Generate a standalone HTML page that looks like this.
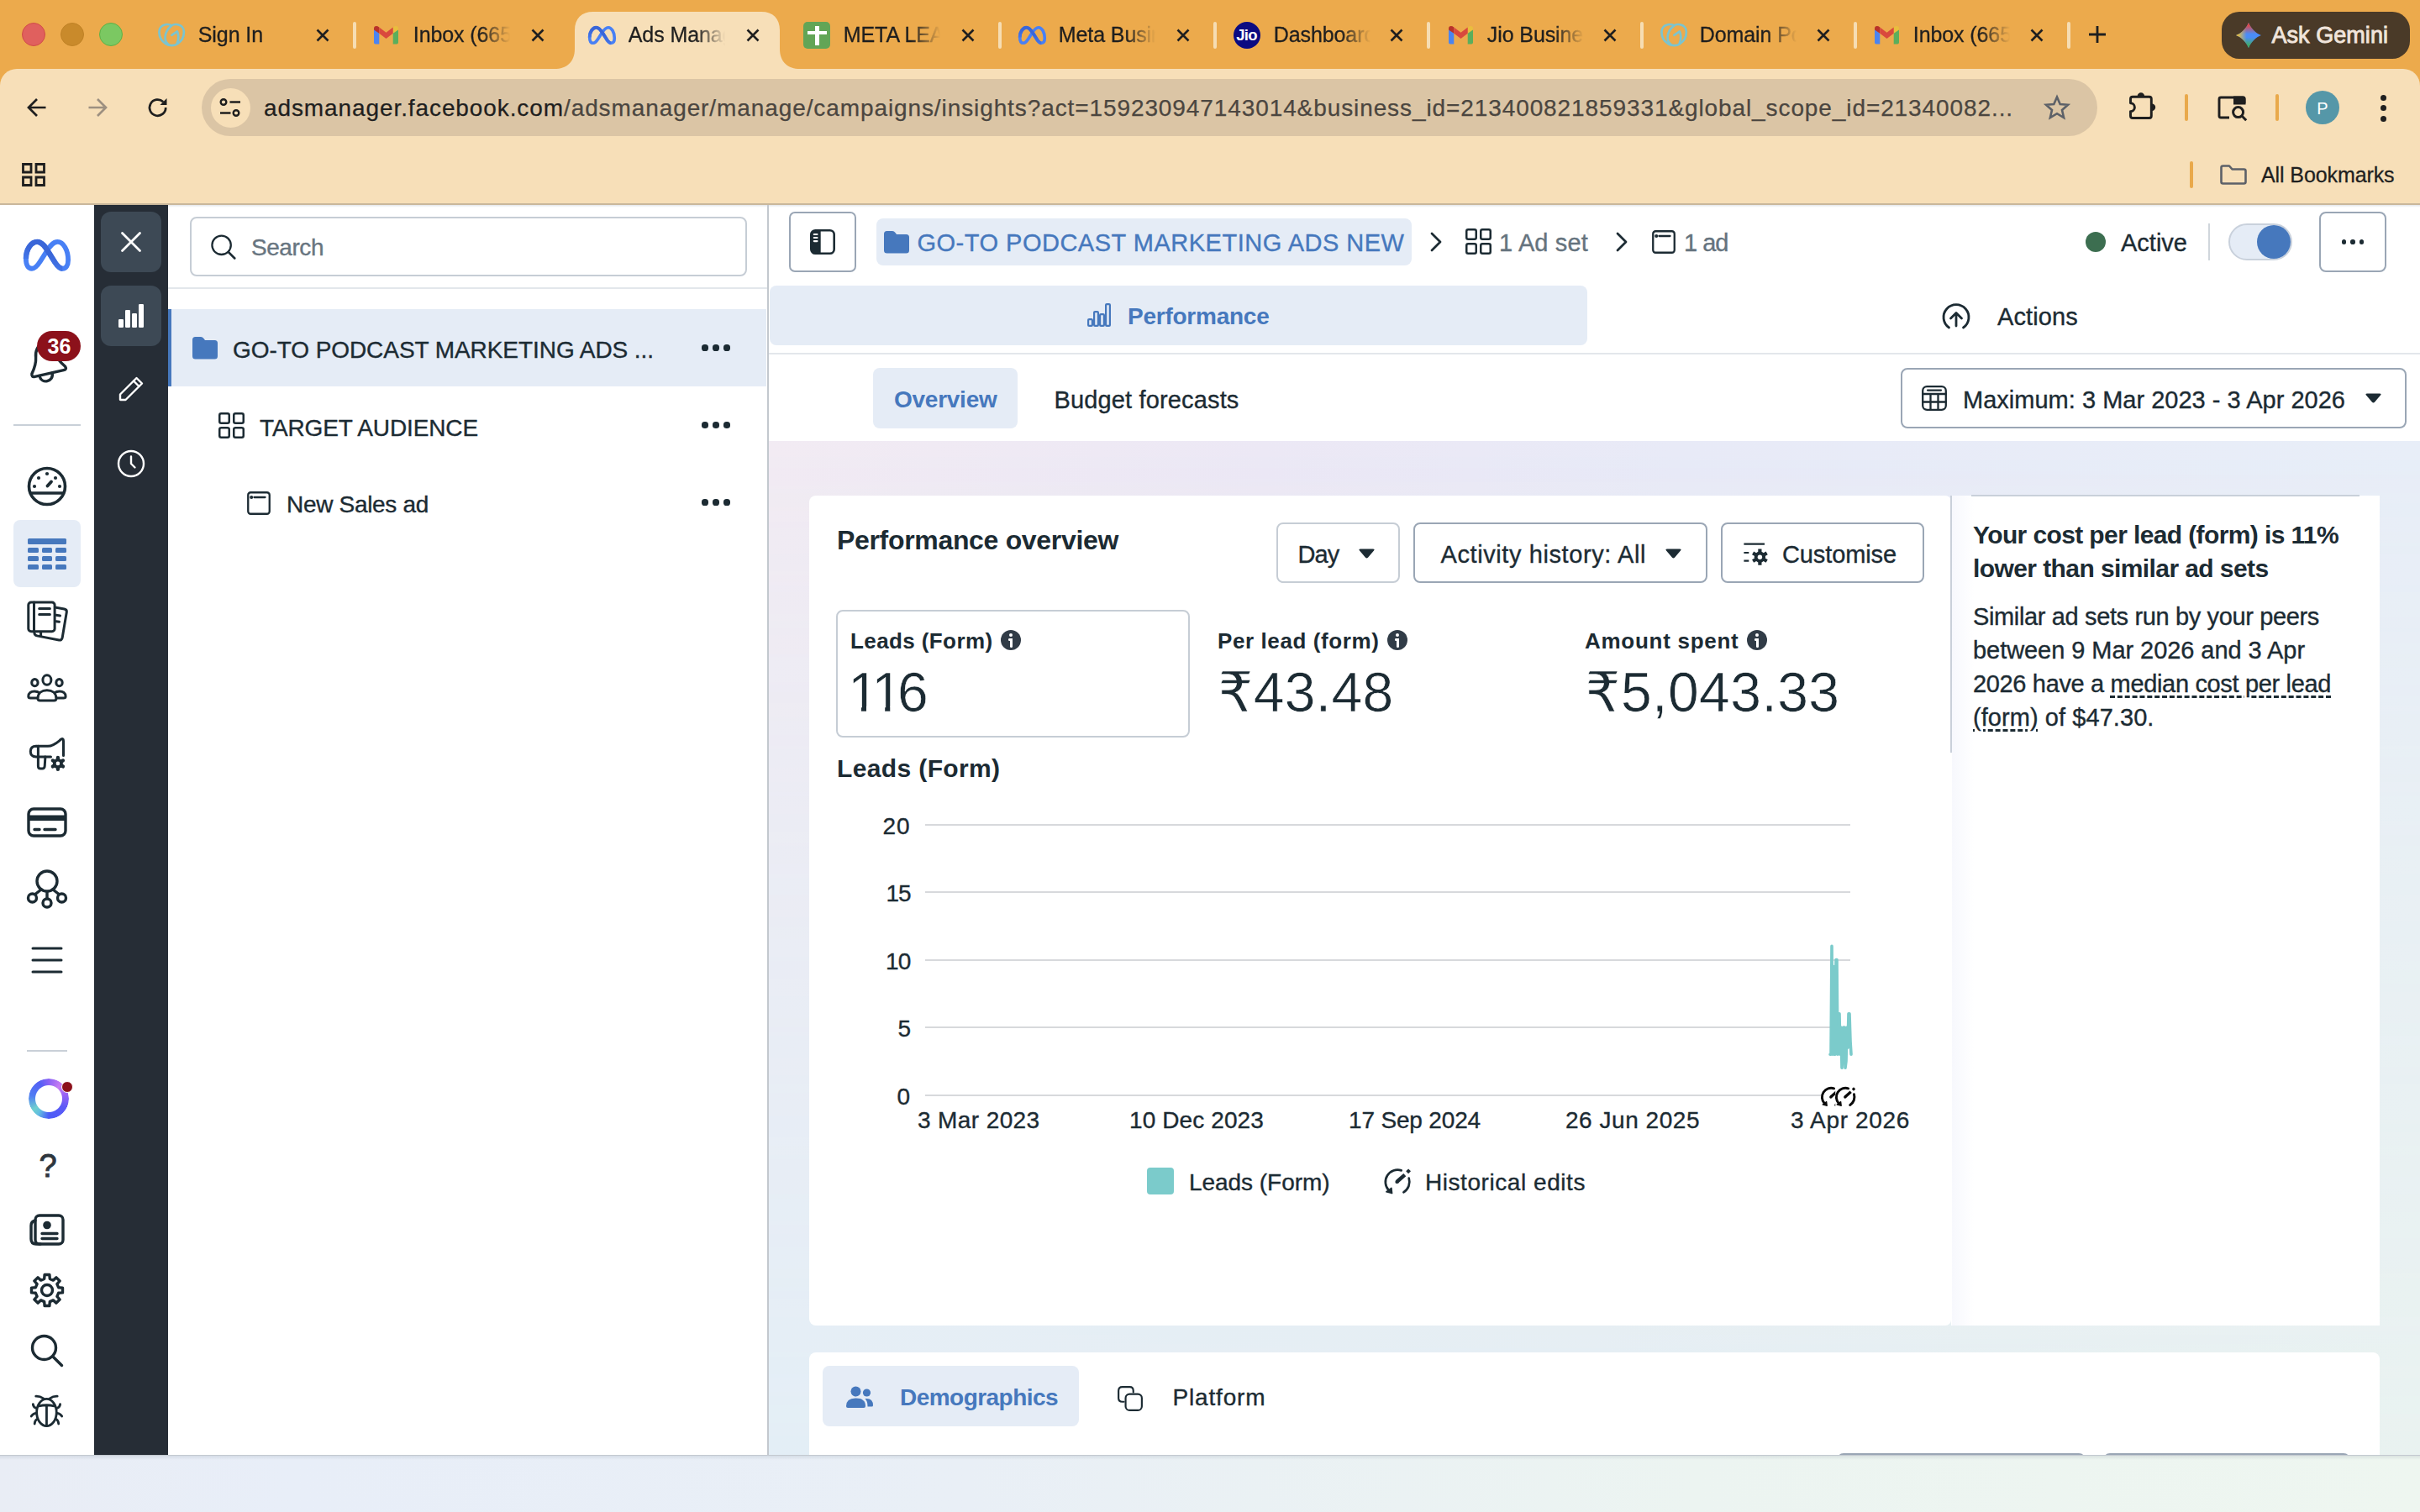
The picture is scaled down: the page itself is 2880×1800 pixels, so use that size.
<!DOCTYPE html>
<html lang="en"><head><meta charset="utf-8"><title>Ads Manager - Manage ads - Insights</title>
<style>
html,body{margin:0;padding:0;}
body{width:2880px;height:1800px;overflow:hidden;position:relative;background:#fff;font-family:"Liberation Sans","DejaVu Sans",sans-serif;color:#1C2B33;}
.a{position:absolute;}
.t{position:absolute;white-space:nowrap;}
svg{position:absolute;overflow:visible;}
.box{position:absolute;box-sizing:border-box;}
</style></head><body>
<div class="box" style="left:0px;top:0px;width:2880px;height:120px;background:#ECAA4C;"></div>
<div class="box" style="left:0px;top:82px;width:2880px;height:161px;background:#F7DFB8;border-radius:20px 20px 0 0;"></div>
<div class="box" style="left:0px;top:242px;width:2880px;height:2px;background:#C9B79B;"></div>
<div class="box" style="left:26px;top:27px;width:28px;height:28px;background:#E0605E;border-radius:14px;border:1px solid #D14B47;"></div>
<div class="box" style="left:72px;top:27px;width:28px;height:28px;background:#C98A2B;border-radius:14px;border:1px solid #C08226;"></div>
<div class="box" style="left:118px;top:27px;width:28px;height:28px;background:#7BC862;border-radius:14px;border:1px solid #5FB046;"></div>
<svg style="left:660px;top:14px" width="292" height="68" viewBox="0 0 292 68"><path fill="#F7DFB8" d="M0 68 C14 68 24 60 24 44 L24 22 C24 8 32 0 46 0 L246 0 C260 0 268 8 268 22 L268 44 C268 60 278 68 292 68 Z"/></svg>
<svg style="left:187.8px;top:27.4px;" width="33" height="30" viewBox="0 0 33 30" fill="none"><g stroke="#7BC4CF" stroke-width="2.700" fill="none" stroke-linecap="round" stroke-linejoin="round"><path d="M16.200 3.400 C14.500 2.300 12 1.600 9 2.300 C4 3.400 1.400 7 1.400 11 C1.400 17 5 22.500 9.500 25.300 C13 27.600 19.500 27.600 23 25.300 C27.500 22.500 30.900 17 30.900 11 C30.900 7 28.300 3.400 23.400 2.300 C20.400 1.600 17.900 2.300 16.200 3.400 Z"/><path d="M16.200 3.400 C12.500 6.500 8.500 12 8.500 17.500 C8.500 22 10.500 25 13.500 26.700"/><path d="M16.400 14.800 L22.900 10.400 C24.500 14 24.800 19.500 22.800 24.500"/></g></svg>
<div class="a" style="left:235.8px;top:25.300px;width:118px;height:32px;overflow:hidden;white-space:nowrap;font-size:25px;line-height:32px;color:#1F1F1F;letter-spacing:-0.1px;-webkit-text-stroke:0.3px;-webkit-mask-image:linear-gradient(90deg,#000 80px,transparent 115px);mask-image:linear-gradient(90deg,#000 80px,transparent 115px)">Sign In</div>
<svg style="left:376px;top:34px;" width="16" height="16" viewBox="0 0 16 16" fill="none"><path d="M1.5 1.5 L14.5 14.5 M14.5 1.5 L1.5 14.5" stroke="#1F1F1F" stroke-width="2.6" stroke-linecap="butt"/></svg>
<div class="box" style="left:419.5px;top:26px;width:4px;height:32px;background:#F6DDB3;border-radius:2px;"></div>
<svg style="left:444.7px;top:31px;" width="29" height="21.5" viewBox="0 0 30 22" fill="none"><path d="M0 3 L0 20 Q0 22 2 22 L6.5 22 L6.5 9 Z" fill="#4B84F0"/><path d="M30 3 L30 20 Q30 22 28 22 L23.5 22 L23.5 9 Z" fill="#5BAE5C"/><path d="M0 3 Q0 0 3 0 Q4.5 0 6.5 1.5 L6.5 9 L0 4.5 Z" fill="#B8322A"/><path d="M30 3 Q30 0 27 0 Q25.500 0 23.5 1.5 L23.5 9 L30 4.5 Z" fill="#E9BE3E"/><path d="M6.5 1.5 L15 8 L23.5 1.5 L23.5 9 L15 15.5 L6.5 9 Z" fill="#D9493D"/></svg>
<div class="a" style="left:491.8px;top:25.300px;width:118px;height:32px;overflow:hidden;white-space:nowrap;font-size:25px;line-height:32px;color:#1F1F1F;letter-spacing:-0.1px;-webkit-text-stroke:0.3px;-webkit-mask-image:linear-gradient(90deg,#000 80px,transparent 115px);mask-image:linear-gradient(90deg,#000 80px,transparent 115px)">Inbox (665) - pgrowth</div>
<svg style="left:632px;top:34px;" width="16" height="16" viewBox="0 0 16 16" fill="none"><path d="M1.5 1.5 L14.5 14.5 M14.5 1.5 L1.5 14.5" stroke="#1F1F1F" stroke-width="2.6" stroke-linecap="butt"/></svg>
<svg style="left:700px;top:31px" width="33" height="22" viewBox="0 0 56 37.700" preserveAspectRatio="none"><defs><linearGradient id="mg1" gradientUnits="userSpaceOnUse" x1="1" y1="32" x2="9" y2="10"><stop offset="0" stop-color="#4880F5"/><stop offset="1" stop-color="#3A66D8"/></linearGradient></defs><path d="M2.900 23 C2.900 12 9 2.900 16.300 2.900 C22 2.900 26 9 30 15.500 L37.500 27.500 C40.500 32 43 34.750 46.300 34.750 C50.500 34.750 53.100 31 53.100 24.500 C53.100 13 47.500 2.900 40.500 2.900 C35 2.900 31 8.500 27 15 L20 26 C16.500 31.500 13.500 34.750 10 34.750 C5.500 34.750 2.900 30.500 2.900 23 Z" stroke="#4880F5" stroke-width="6.2" stroke-linejoin="round" fill="none"/><path d="M2.900 23 C2.900 12 9 2.900 16.300 2.900 C22 2.900 26 9 30 15.500 L37.500 27.500 C40.500 32 43 34.750 46.300 34.750" stroke="url(#mg1)" stroke-width="6.8" fill="none"/></svg>
<div class="a" style="left:747.8px;top:25.300px;width:118px;height:32px;overflow:hidden;white-space:nowrap;font-size:25px;line-height:32px;color:#1F1F1F;letter-spacing:-0.1px;-webkit-text-stroke:0.3px;-webkit-mask-image:linear-gradient(90deg,#000 80px,transparent 115px);mask-image:linear-gradient(90deg,#000 80px,transparent 115px)">Ads Manager - Manage ads</div>
<svg style="left:888px;top:34px;" width="16" height="16" viewBox="0 0 16 16" fill="none"><path d="M1.5 1.5 L14.5 14.5 M14.5 1.5 L1.5 14.5" stroke="#1F1F1F" stroke-width="2.6" stroke-linecap="butt"/></svg>
<div class="box" style="left:956px;top:26px;width:32px;height:32px;background:#62A556;border-radius:5px;"></div>
<div class="box" style="left:969.5px;top:30.5px;width:5px;height:23px;background:#fff;"></div>
<div class="box" style="left:960.5px;top:36.7px;width:23px;height:4.6px;background:#fff;"></div>
<div class="a" style="left:1003.8px;top:25.300px;width:118px;height:32px;overflow:hidden;white-space:nowrap;font-size:25px;line-height:32px;color:#1F1F1F;letter-spacing:-0.1px;-webkit-text-stroke:0.3px;-webkit-mask-image:linear-gradient(90deg,#000 80px,transparent 115px);mask-image:linear-gradient(90deg,#000 80px,transparent 115px)">META LEADS - Google Sheets</div>
<svg style="left:1144px;top:34px;" width="16" height="16" viewBox="0 0 16 16" fill="none"><path d="M1.5 1.5 L14.5 14.5 M14.5 1.5 L1.5 14.5" stroke="#1F1F1F" stroke-width="2.6" stroke-linecap="butt"/></svg>
<div class="box" style="left:1187.5px;top:26px;width:4px;height:32px;background:#F6DDB3;border-radius:2px;"></div>
<svg style="left:1212px;top:31px" width="33" height="22" viewBox="0 0 56 37.700" preserveAspectRatio="none"><defs><linearGradient id="mg2" gradientUnits="userSpaceOnUse" x1="1" y1="32" x2="9" y2="10"><stop offset="0" stop-color="#4880F5"/><stop offset="1" stop-color="#3A66D8"/></linearGradient></defs><path d="M2.900 23 C2.900 12 9 2.900 16.300 2.900 C22 2.900 26 9 30 15.500 L37.500 27.500 C40.500 32 43 34.750 46.300 34.750 C50.500 34.750 53.100 31 53.100 24.500 C53.100 13 47.500 2.900 40.500 2.900 C35 2.900 31 8.500 27 15 L20 26 C16.500 31.500 13.500 34.750 10 34.750 C5.500 34.750 2.900 30.500 2.900 23 Z" stroke="#4880F5" stroke-width="6.2" stroke-linejoin="round" fill="none"/><path d="M2.900 23 C2.900 12 9 2.900 16.300 2.900 C22 2.900 26 9 30 15.500 L37.500 27.500 C40.500 32 43 34.750 46.300 34.750" stroke="url(#mg2)" stroke-width="6.8" fill="none"/></svg>
<div class="a" style="left:1259.8px;top:25.300px;width:118px;height:32px;overflow:hidden;white-space:nowrap;font-size:25px;line-height:32px;color:#1F1F1F;letter-spacing:-0.1px;-webkit-text-stroke:0.3px;-webkit-mask-image:linear-gradient(90deg,#000 80px,transparent 115px);mask-image:linear-gradient(90deg,#000 80px,transparent 115px)">Meta Business Suite</div>
<svg style="left:1400px;top:34px;" width="16" height="16" viewBox="0 0 16 16" fill="none"><path d="M1.5 1.5 L14.5 14.5 M14.5 1.5 L1.5 14.5" stroke="#1F1F1F" stroke-width="2.6" stroke-linecap="butt"/></svg>
<div class="box" style="left:1443.5px;top:26px;width:4px;height:32px;background:#F6DDB3;border-radius:2px;"></div>
<div class="box" style="left:1468px;top:26px;width:32px;height:32px;background:#0B0B82;border-radius:16px;"></div>
<span class="t" style="left:1471.3px;top:32.3px;font-size:18.500px;line-height:20px;font-weight:700;color:#fff;letter-spacing:-0.8px">Jio</span>
<div class="a" style="left:1515.8px;top:25.300px;width:118px;height:32px;overflow:hidden;white-space:nowrap;font-size:25px;line-height:32px;color:#1F1F1F;letter-spacing:-0.1px;-webkit-text-stroke:0.3px;-webkit-mask-image:linear-gradient(90deg,#000 80px,transparent 115px);mask-image:linear-gradient(90deg,#000 80px,transparent 115px)">Dashboard - Jio</div>
<svg style="left:1654px;top:34px;" width="16" height="16" viewBox="0 0 16 16" fill="none"><path d="M1.5 1.5 L14.5 14.5 M14.5 1.5 L1.5 14.5" stroke="#1F1F1F" stroke-width="2.6" stroke-linecap="butt"/></svg>
<div class="box" style="left:1697.5px;top:26px;width:4px;height:32px;background:#F6DDB3;border-radius:2px;"></div>
<svg style="left:1723.7px;top:31px;" width="29" height="21.5" viewBox="0 0 30 22" fill="none"><path d="M0 3 L0 20 Q0 22 2 22 L6.5 22 L6.5 9 Z" fill="#4B84F0"/><path d="M30 3 L30 20 Q30 22 28 22 L23.5 22 L23.5 9 Z" fill="#5BAE5C"/><path d="M0 3 Q0 0 3 0 Q4.5 0 6.5 1.5 L6.5 9 L0 4.5 Z" fill="#B8322A"/><path d="M30 3 Q30 0 27 0 Q25.500 0 23.5 1.5 L23.5 9 L30 4.5 Z" fill="#E9BE3E"/><path d="M6.5 1.5 L15 8 L23.5 1.5 L23.5 9 L15 15.5 L6.5 9 Z" fill="#D9493D"/></svg>
<div class="a" style="left:1769.8px;top:25.300px;width:118px;height:32px;overflow:hidden;white-space:nowrap;font-size:25px;line-height:32px;color:#1F1F1F;letter-spacing:-0.1px;-webkit-text-stroke:0.3px;-webkit-mask-image:linear-gradient(90deg,#000 80px,transparent 115px);mask-image:linear-gradient(90deg,#000 80px,transparent 115px)">Jio Business - Mail</div>
<svg style="left:1908px;top:34px;" width="16" height="16" viewBox="0 0 16 16" fill="none"><path d="M1.5 1.5 L14.5 14.5 M14.5 1.5 L1.5 14.5" stroke="#1F1F1F" stroke-width="2.6" stroke-linecap="butt"/></svg>
<div class="box" style="left:1951.5px;top:26px;width:4px;height:32px;background:#F6DDB3;border-radius:2px;"></div>
<svg style="left:1975.8px;top:27.4px;" width="33" height="30" viewBox="0 0 33 30" fill="none"><g stroke="#7BC4CF" stroke-width="2.700" fill="none" stroke-linecap="round" stroke-linejoin="round"><path d="M16.200 3.400 C14.500 2.300 12 1.600 9 2.300 C4 3.400 1.400 7 1.400 11 C1.400 17 5 22.500 9.500 25.300 C13 27.600 19.500 27.600 23 25.300 C27.500 22.500 30.900 17 30.900 11 C30.900 7 28.300 3.400 23.400 2.300 C20.400 1.600 17.900 2.300 16.200 3.400 Z"/><path d="M16.200 3.400 C12.500 6.500 8.500 12 8.500 17.500 C8.500 22 10.500 25 13.500 26.700"/><path d="M16.400 14.800 L22.900 10.400 C24.500 14 24.800 19.500 22.800 24.500"/></g></svg>
<div class="a" style="left:2022.8px;top:25.300px;width:118px;height:32px;overflow:hidden;white-space:nowrap;font-size:25px;line-height:32px;color:#1F1F1F;letter-spacing:-0.1px;-webkit-text-stroke:0.3px;-webkit-mask-image:linear-gradient(90deg,#000 80px,transparent 115px);mask-image:linear-gradient(90deg,#000 80px,transparent 115px)">Domain Portfolio</div>
<svg style="left:2162px;top:34px;" width="16" height="16" viewBox="0 0 16 16" fill="none"><path d="M1.5 1.5 L14.5 14.5 M14.5 1.5 L1.5 14.5" stroke="#1F1F1F" stroke-width="2.6" stroke-linecap="butt"/></svg>
<div class="box" style="left:2205.5px;top:26px;width:4px;height:32px;background:#F6DDB3;border-radius:2px;"></div>
<svg style="left:2230.7px;top:31px;" width="29" height="21.5" viewBox="0 0 30 22" fill="none"><path d="M0 3 L0 20 Q0 22 2 22 L6.5 22 L6.5 9 Z" fill="#4B84F0"/><path d="M30 3 L30 20 Q30 22 28 22 L23.5 22 L23.5 9 Z" fill="#5BAE5C"/><path d="M0 3 Q0 0 3 0 Q4.5 0 6.5 1.5 L6.5 9 L0 4.5 Z" fill="#B8322A"/><path d="M30 3 Q30 0 27 0 Q25.500 0 23.5 1.5 L23.5 9 L30 4.5 Z" fill="#E9BE3E"/><path d="M6.5 1.5 L15 8 L23.5 1.5 L23.5 9 L15 15.5 L6.5 9 Z" fill="#D9493D"/></svg>
<div class="a" style="left:2276.8px;top:25.300px;width:118px;height:32px;overflow:hidden;white-space:nowrap;font-size:25px;line-height:32px;color:#1F1F1F;letter-spacing:-0.1px;-webkit-text-stroke:0.3px;-webkit-mask-image:linear-gradient(90deg,#000 80px,transparent 115px);mask-image:linear-gradient(90deg,#000 80px,transparent 115px)">Inbox (665) - pgrowth</div>
<svg style="left:2416px;top:34px;" width="16" height="16" viewBox="0 0 16 16" fill="none"><path d="M1.5 1.5 L14.5 14.5 M14.5 1.5 L1.5 14.5" stroke="#1F1F1F" stroke-width="2.6" stroke-linecap="butt"/></svg>
<div class="box" style="left:2459.5px;top:26px;width:4px;height:32px;background:#F6DDB3;border-radius:2px;"></div>
<svg style="left:2485px;top:30px;" width="22" height="22" viewBox="0 0 22 22" fill="none"><path d="M11 1 V21 M1 11 H21" stroke="#1F1F1F" stroke-width="2.8"/></svg>
<div class="box" style="left:2644px;top:14px;width:224px;height:56px;background:#4A3A28;border-radius:21px;"></div>
<svg style="left:2661px;top:27px" width="30" height="30" viewBox="0 0 30 30"><defs><linearGradient id="gmr" x1="0" y1="0" x2="0" y2="1"><stop offset="0.080" stop-color="#E8443A"/><stop offset="0.450" stop-color="#E8443A" stop-opacity="0"/></linearGradient><linearGradient id="gmy" x1="0" y1="0" x2="1" y2="0"><stop offset="0.050" stop-color="#F6C12C"/><stop offset="0.420" stop-color="#F6C12C" stop-opacity="0"/></linearGradient><linearGradient id="gmg" x1="0" y1="1" x2="0" y2="0"><stop offset="0.080" stop-color="#3FAE5A"/><stop offset="0.420" stop-color="#3FAE5A" stop-opacity="0"/></linearGradient></defs><path d="M15 0 C17 6 24 13 30 15 C24 17 17 24 15 30 C13 24 6 17 0 15 C6 13 13 6 15 0 Z" fill="#4A8CF7"/><path d="M15 0 C17 6 24 13 30 15 C24 17 17 24 15 30 C13 24 6 17 0 15 C6 13 13 6 15 0 Z" fill="url(#gmg)"/><path d="M15 0 C17 6 24 13 30 15 C24 17 17 24 15 30 C13 24 6 17 0 15 C6 13 13 6 15 0 Z" fill="url(#gmr)"/><path d="M15 0 C17 6 24 13 30 15 C24 17 17 24 15 30 C13 24 6 17 0 15 C6 13 13 6 15 0 Z" fill="url(#gmy)"/></svg>
<svg style="left:32px;top:116px;" width="24" height="24" viewBox="0 0 24 24" fill="none"><path d="M22.500 12 H2.500 M12 2 L2 12 L12 22" stroke="#1F1F1F" stroke-width="2.7" stroke-linejoin="miter"/></svg>
<svg style="left:104px;top:116px;" width="24" height="24" viewBox="0 0 24 24" fill="none"><path d="M1.500 12 H21.500 M12 2 L22 12 L12 22" stroke="#9D9080" stroke-width="2.7"/></svg>
<svg style="left:176px;top:116px;" width="24" height="24" viewBox="0 0 24 24" fill="none"><path d="M21.200 12 A9.600 9.600 0 1 1 18.200 5.200" stroke="#1F1F1F" stroke-width="2.7"/><path d="M22.500 1 V9 H14.500 Z" fill="#1F1F1F"/></svg>
<div class="box" style="left:240px;top:94px;width:2256px;height:68px;background:#DBC5A5;border-radius:34px;"></div>
<div class="box" style="left:250.5px;top:104.5px;width:47px;height:47px;background:#F7DFB8;border-radius:24px;"></div>
<svg style="left:261px;top:116px;" width="26" height="24" viewBox="0 0 26 24" fill="none"><circle cx="5" cy="5.500" r="3.300" stroke="#1F1F1F" stroke-width="2.400"/><path d="M12.500 5.500 H25" stroke="#1F1F1F" stroke-width="2.500"/><circle cx="20" cy="18.500" r="3.300" stroke="#1F1F1F" stroke-width="2.400"/><path d="M1 18.500 H13.500" stroke="#1F1F1F" stroke-width="2.500"/></svg>
<svg style="left:2433px;top:113px;" width="30" height="30" viewBox="0 0 30 30" fill="none"><path d="M15 2.500 L18.700 11 L28 11.800 L21 18 L23.100 27 L15 22.200 L6.900 27 L9 18 L2 11.800 L11.300 11 Z" stroke="#5D6168" stroke-width="2.600" stroke-linejoin="miter"/></svg>
<svg style="left:2530px;top:106px;" width="40" height="40" viewBox="2530 106 40 40" fill="none"><path d="M2535.500 117.700 Q2535.500 115.200 2538 115.200 H2557.800 Q2560.300 115.200 2560.300 117.700 V138 Q2560.300 140.500 2557.800 140.500 H2538 Q2535.500 140.500 2535.500 138 V132.600 A4.900 4.900 0 0 0 2535.500 122.800 Z" stroke="#1F1F1F" stroke-width="2.900" stroke-linejoin="round"/><path d="M2543.700 114.500 A4.200 4.200 0 0 1 2552.100 114.500 Z M2561 123.500 A4.200 4.200 0 0 1 2561 131.900 Z" fill="#1F1F1F"/></svg>
<div class="box" style="left:2600px;top:111.8px;width:3.6px;height:32px;background:#E9A94B;border-radius:2px;"></div>
<svg style="left:2638px;top:113px;" width="36" height="32" viewBox="0 0 36 32" fill="none"><path d="M15 27 H5 Q3 27 3 25 V5 Q3 3 5 3 H31 Q33 3 33 5 V10" stroke="#1F1F1F" stroke-width="2.900"/><path d="M20 1.600 H31.500 Q34.500 1.600 34.500 4.600 V11.500 H20 Z" fill="#1F1F1F"/><circle cx="25.600" cy="20.600" r="6" stroke="#1F1F1F" stroke-width="3"/><path d="M30 25 L35.200 30.200" stroke="#1F1F1F" stroke-width="3"/></svg>
<div class="box" style="left:2708.2px;top:111.8px;width:3.6px;height:32px;background:#E9A94B;border-radius:2px;"></div>
<div class="box" style="left:2744px;top:108px;width:40px;height:40px;background:#5597A8;border-radius:20px;"></div>
<div class="box" style="left:2832.5px;top:112.5px;width:7px;height:7px;background:#1F1F1F;border-radius:4px;"></div>
<div class="box" style="left:2832.5px;top:125.0px;width:7px;height:7px;background:#1F1F1F;border-radius:4px;"></div>
<div class="box" style="left:2832.5px;top:137.5px;width:7px;height:7px;background:#1F1F1F;border-radius:4px;"></div>
<svg style="left:26px;top:194px;" width="28" height="28" viewBox="0 0 28 28" fill="none"><path d="M1.500 1.500 H11 V11 H1.500 Z M17 1.500 H26.500 V11 H17 Z M1.500 17 H11 V26.500 H1.500 Z M17 17 H26.500 V26.500 H17 Z" stroke="#1F1F1F" stroke-width="2.800"/></svg>
<div class="box" style="left:2606px;top:192px;width:3.5px;height:32px;background:#E9A94B;border-radius:2px;"></div>
<svg style="left:2642px;top:196px;" width="32" height="24" viewBox="0 0 32 24" fill="none"><path d="M1.500 3.500 Q1.500 1.500 3.500 1.500 H11 L14.500 5.500 H28.500 Q30.500 5.500 30.500 7.500 V20.500 Q30.500 22.500 28.500 22.500 H3.500 Q1.500 22.500 1.500 20.500 Z" stroke="#5D6168" stroke-width="2.600" stroke-linejoin="round"/></svg>
<div class="box" style="left:0px;top:1732.5px;width:2880px;height:68px;background:#E9EFF6;"></div>
<div class="box" style="left:0px;top:244px;width:112px;height:1488.5px;background:#fff;"></div>
<svg style="left:28px;top:285px" width="56" height="37.7" viewBox="0 0 56 37.700" preserveAspectRatio="none"><defs><linearGradient id="mg3" gradientUnits="userSpaceOnUse" x1="1" y1="32" x2="9" y2="10"><stop offset="0" stop-color="#4880F5"/><stop offset="1" stop-color="#3A66D8"/></linearGradient></defs><path d="M2.900 23 C2.900 12 9 2.900 16.300 2.900 C22 2.900 26 9 30 15.500 L37.500 27.500 C40.500 32 43 34.750 46.300 34.750 C50.500 34.750 53.100 31 53.100 24.500 C53.100 13 47.500 2.900 40.500 2.900 C35 2.900 31 8.500 27 15 L20 26 C16.500 31.500 13.500 34.750 10 34.750 C5.500 34.750 2.900 30.500 2.900 23 Z" stroke="#4880F5" stroke-width="5.8" stroke-linejoin="round" fill="none"/><path d="M2.900 23 C2.900 12 9 2.900 16.300 2.900 C22 2.900 26 9 30 15.500 L37.500 27.500 C40.500 32 43 34.750 46.300 34.750" stroke="url(#mg3)" stroke-width="6.3999999999999995" fill="none"/></svg>
<svg style="left:30px;top:400px;" width="60" height="62" viewBox="30 400 60 62" fill="none"><g transform="translate(58.600 444.500) rotate(-12.500)"><path d="M-17.500 0 Q-21.800 0 -20.300 -4 C-15 -11 -12.500 -15 -11.500 -22 C-10.500 -30 -6 -36 0 -36 C6 -36 10.500 -30 11.500 -22 C12.500 -15 15 -11 20.300 -4 Q21.800 0 17.500 0 Z" stroke="#1C2B33" stroke-width="3.4" stroke-linecap="round" stroke-linejoin="round" fill="#fff"/><path d="M-12 0.500 C-12 11 3.500 11 3.500 0.500" stroke="#1C2B33" stroke-width="3.4" stroke-linecap="round" stroke-linejoin="round"/></g></svg>
<div class="box" style="left:44px;top:394px;width:52px;height:36px;background:#8C111B;border-radius:18px;"></div>
<div class="box" style="left:16px;top:505px;width:80px;height:2px;background:#C9D0D8;"></div>
<svg style="left:31px;top:554px;" width="50" height="50" viewBox="0 0 50 50" fill="none"><circle cx="25" cy="25" r="21.500" stroke="#1C2B33" stroke-width="3.600"/><path d="M5 33 H45" stroke="#1C2B33" stroke-width="3.600"/><path d="M25.500 24.500 L30 19.500" stroke="#1C2B33" stroke-width="3.800" stroke-linecap="round"/><g fill="#1C2B33"><circle cx="25" cy="10" r="2.100"/><circle cx="15" cy="15" r="2.100"/><circle cx="35" cy="15" r="2.100"/><circle cx="10" cy="25" r="2.100"/><circle cx="40" cy="25" r="2.100"/></g></svg>
<div class="box" style="left:16px;top:619px;width:80px;height:80px;background:#E5ECF6;border-radius:8px;"></div>
<svg style="left:33px;top:641px;" width="46" height="38" viewBox="0 0 46 38" fill="none"><rect x="0" y="0" width="46" height="7" rx="1.500" fill="#4678BD"/><rect x="0" y="11" width="13" height="6" rx="1.500" fill="#4678BD"/><rect x="17" y="11" width="12" height="6" rx="1.500" fill="#4678BD"/><rect x="33" y="11" width="13" height="6" rx="1.500" fill="#4678BD"/><rect x="0" y="21" width="13" height="6" rx="1.500" fill="#4678BD"/><rect x="17" y="21" width="12" height="6" rx="1.500" fill="#4678BD"/><rect x="33" y="21" width="13" height="6" rx="1.500" fill="#4678BD"/><rect x="0" y="31" width="13" height="6" rx="1.500" fill="#4678BD"/><rect x="17" y="31" width="12" height="6" rx="1.500" fill="#4678BD"/><rect x="33" y="31" width="13" height="6" rx="1.500" fill="#4678BD"/></svg>
<svg style="left:28px;top:708px;" width="58" height="60" viewBox="28 708 58 60" fill="none"><g stroke="#1C2B33" stroke-width="3" stroke-linecap="round" stroke-linejoin="round"><path d="M66.800 723.300 L76.500 725 Q79.800 725.600 79.300 728.800 L74.200 759 Q73.600 762.600 70.200 762 L44 756.900 Q41.200 756.300 40.900 753.600"/><path d="M48.600 753 V757.300 M66.800 732.300 L71.500 733.100 M66.800 739.700 L70.500 740.300"/><rect x="33.800" y="717" width="31.300" height="34.700" rx="3.200" fill="#fff"/><path d="M40.500 717 V751.700 M46.700 724.500 H59.400 M46.700 731.400 H59.400"/></g></svg>
<svg style="left:28px;top:800px;" width="58" height="40" viewBox="28 800 58 40" fill="none"><g stroke="#1C2B33" stroke-width="3" stroke-linecap="round" stroke-linejoin="round" fill="#fff"><ellipse cx="41.400" cy="812.700" rx="3.700" ry="4.100"/><ellipse cx="70.500" cy="812.700" rx="3.700" ry="4.100"/><path d="M46 831.100 H36.300 Q33.800 831.100 33.800 829 C33.800 825 37 822.900 41 822.900 C43.500 822.900 45.500 823.500 47 824.800"/><path d="M65.900 831.100 H75.600 Q78.100 831.100 78.100 829 C78.100 825 74.900 822.900 70.900 822.900 C68.400 822.900 66.400 823.500 64.900 824.800"/><ellipse cx="55.900" cy="809.500" rx="5" ry="5.800"/><path d="M47.500 834.100 Q45 834.100 45 831.500 C45 825 50 821.800 55.900 821.800 C62 821.800 66.900 825 66.900 831.500 Q66.900 834.100 64.400 834.100 Z"/></g></svg>
<svg style="left:30px;top:872px;" width="56" height="50" viewBox="30 872 56 50" fill="none"><g stroke="#1C2B33" stroke-width="3" stroke-linecap="round" stroke-linejoin="round"><path d="M43 888.300 H57 C64 888.300 69 883 72.500 880.300 Q75.500 878.300 75.500 882 V899.500"/><path d="M43 888.300 Q36.300 888.300 36.300 894.600 Q36.300 901 43 901 H60.500"/><path d="M45.400 888.300 V912 Q45.400 915 48.300 915 H50.300 Q53 915 53.200 912 L53.900 901"/></g><g transform="translate(68.900 908.900)"><circle r="6" fill="#1C2B33"/><g stroke="#1C2B33" stroke-width="4.300" stroke-linecap="round"><path d="M0 -7 V7 M-6.060 -3.500 L6.060 3.500 M-6.060 3.500 L6.060 -3.500"/></g><circle r="2.300" fill="#fff"/></g></svg>
<svg style="left:32px;top:961px;" width="48" height="36" viewBox="0 0 48 36" fill="none"><rect x="2" y="2" width="44" height="32" rx="6" stroke="#1C2B33" stroke-width="3.4" stroke-linecap="round" stroke-linejoin="round"/><rect x="2" y="9.500" width="44" height="6.500" fill="#1C2B33"/><path d="M9 26.500 H15 M21 26.500 H34" stroke="#1C2B33" stroke-width="3.4" stroke-linecap="round" stroke-linejoin="round"/></svg>
<svg style="left:30.7px;top:1034.7px;" width="50" height="50" viewBox="0 0 50 50" fill="none"><g stroke="#1C2B33" stroke-width="3.4" stroke-linecap="round" stroke-linejoin="round" fill="#fff"><path d="M18 24 L9 31 M32 24 L41 31 M25 27 V35"/><circle cx="25" cy="14" r="12"/><circle cx="7.500" cy="34" r="5"/><circle cx="42.500" cy="34" r="5"/><circle cx="25" cy="40" r="5"/></g></svg>
<svg style="left:38px;top:1127px;" width="36" height="32" viewBox="0 0 36 32" fill="none"><path d="M1 2 H35 M1 16 H35 M1 30 H35" stroke="#1C2B33" stroke-width="3" stroke-linecap="round"/></svg>
<div class="box" style="left:32px;top:1250px;width:48px;height:2px;background:#C9D0D8;"></div>
<div class="a" style="left:34px;top:1284px;width:48px;height:48px;border-radius:50%;background:conic-gradient(from 0deg,#8A62F5 0deg,#C77DF2 40deg,#9A63F4 75deg,#5B5AF6 120deg,#4B5CF7 180deg,#62BFE0 215deg,#6FD0CF 235deg,#4F7DF3 280deg,#5560F5 330deg,#8A62F5 360deg);-webkit-mask:radial-gradient(circle,transparent 15.500px,#000 16.500px);mask:radial-gradient(circle,transparent 15.500px,#000 16.500px)"></div>
<div class="box" style="left:73px;top:1287px;width:14px;height:14px;background:#8C111B;border-radius:7px;border:1.500px solid #fff;"></div>
<svg style="left:34px;top:1444px;" width="44" height="40" viewBox="0 0 44 40" fill="none"><g stroke="#1C2B33" stroke-width="3.4" stroke-linecap="round" stroke-linejoin="round"><rect x="8" y="3" width="33" height="34" rx="5"/><path d="M8 9 Q3 10 3 15 V31 Q3 37 9 37 H14"/><path d="M16 24.500 H34 M16 30.500 H34"/></g><circle cx="22" cy="14.500" r="4.800" fill="#1C2B33"/></svg>
<svg style="left:34px;top:1514px;" width="44" height="44" viewBox="0 0 44 44" fill="none"><path d="M18.7 8.4 L19.1 3.5 L24.9 3.5 L25.3 8.4 L29.3 10.1 L33.0 6.9 L37.1 11.0 L33.9 14.7 L35.6 18.7 L40.5 19.1 L40.5 24.9 L35.6 25.3 L33.9 29.3 L37.1 33.0 L33.0 37.1 L29.3 33.9 L25.3 35.6 L24.9 40.5 L19.1 40.5 L18.7 35.6 L14.7 33.9 L11.0 37.1 L6.9 33.0 L10.1 29.3 L8.4 25.3 L3.5 24.9 L3.5 19.1 L8.4 18.7 L10.1 14.7 L6.9 11.0 L11.0 6.9 L14.7 10.1 Z" stroke="#1C2B33" stroke-width="3.4" stroke-linecap="round" stroke-linejoin="round"/><circle cx="22" cy="22" r="6.500" stroke="#1C2B33" stroke-width="3.4" stroke-linecap="round" stroke-linejoin="round"/></svg>
<svg style="left:35px;top:1587px;" width="44" height="44" viewBox="0 0 44 44" fill="none"><circle cx="17.500" cy="17.500" r="14" stroke="#1C2B33" stroke-width="3.4" stroke-linecap="round" stroke-linejoin="round"/><path d="M28 28 L38.500 38.500" stroke="#1C2B33" stroke-width="3.4" stroke-linecap="round" stroke-linejoin="round"/></svg>
<svg style="left:30px;top:1655px;" width="52" height="50" viewBox="30 1655 52 50" fill="none"><g stroke="#1C2B33" stroke-width="2.800" stroke-linecap="round" stroke-linejoin="round" fill="none"><ellipse cx="55.450" cy="1681.500" rx="11.800" ry="16.100"/><path d="M46.300 1673.900 Q55.450 1671.600 64.600 1673.900 M55.450 1673 V1697.500"/><path d="M43.300 1676.500 Q39.800 1675.500 39.300 1671.700 M42.750 1682.300 Q39 1683 37.200 1686 M43.800 1689.700 Q41.300 1691.500 41.200 1695 M51.700 1664.900 Q47.500 1662 42.700 1662.200"/><path d="M43.300 1676.500 Q39.800 1675.500 39.300 1671.700 M42.750 1682.300 Q39 1683 37.200 1686 M43.800 1689.700 Q41.300 1691.500 41.200 1695 M51.700 1664.900 Q47.500 1662 42.700 1662.200" transform="translate(110.900 0) scale(-1 1)"/></g></svg>
<div class="box" style="left:112px;top:244px;width:88px;height:1488.5px;background:#262D36;"></div>
<div class="box" style="left:120px;top:252px;width:72px;height:72px;background:#3D4955;border-radius:12px;"></div>
<svg style="left:144px;top:276px;" width="24" height="24" viewBox="0 0 24 24" fill="none"><path d="M1.500 1.500 L22.500 22.500 M22.500 1.500 L1.500 22.500" stroke="#fff" stroke-width="2.800" stroke-linecap="round"/></svg>
<div class="box" style="left:120px;top:340px;width:72px;height:72px;background:#3D4955;border-radius:12px;"></div>
<svg style="left:141px;top:362px;" width="30" height="28" viewBox="0 0 30 28" fill="none"><rect x="0" y="18" width="6" height="10" rx="1.200" fill="#fff"/><rect x="8" y="7" width="6" height="21" rx="1.200" fill="#fff"/><rect x="16" y="11" width="6" height="17" rx="1.200" fill="#fff"/><rect x="24" y="0" width="6" height="28" rx="1.200" fill="#fff"/></svg>
<svg style="left:141px;top:448px;" width="30" height="30" viewBox="0 0 30 30" fill="none"><g stroke="#fff" stroke-width="2.400" stroke-linejoin="round" stroke-linecap="round"><path d="M21.500 2 L28 8.500 L8.500 28 H2.500 Q2 28 2 27.500 V21.500 Z"/><path d="M18 5.500 L24.500 12"/></g></svg>
<svg style="left:139px;top:535px;" width="34" height="34" viewBox="0 0 34 34" fill="none"><circle cx="17" cy="17" r="15" stroke="#fff" stroke-width="2.400"/><path d="M17 8.500 V17 L21.500 21.500" stroke="#fff" stroke-width="2.400" stroke-linecap="round" stroke-linejoin="round"/></svg>
<div class="box" style="left:200px;top:244px;width:713px;height:1488.5px;background:#fff;"></div>
<div class="box" style="left:200px;top:244px;width:713px;height:3px;background:linear-gradient(#E4E7EA,#fff);"></div>
<div class="box" style="left:913px;top:244px;width:2px;height:1488.5px;background:#C3C8CE;"></div>
<div class="box" style="left:226px;top:258px;width:663px;height:71px;background:#fff;border-radius:8px;border:2px solid #C6CDD5;"></div>
<svg style="left:249px;top:277px;" width="34" height="34" viewBox="0 0 34 34" fill="none"><circle cx="14.600" cy="14.800" r="11.200" stroke="#1C2B33" stroke-width="2.300"/><path d="M22.800 23 L30.300 30.500" stroke="#1C2B33" stroke-width="2.600" stroke-linecap="round"/></svg>
<div class="box" style="left:200px;top:342px;width:713px;height:2px;background:#E3E7EB;"></div>
<div class="box" style="left:200px;top:368px;width:712px;height:92px;background:#E5ECF6;"></div>
<div class="box" style="left:200px;top:368px;width:4px;height:92px;background:#4678BD;"></div>
<svg style="left:229px;top:401px;" width="30" height="27" viewBox="0 0 30 27" fill="none"><path d="M0 3.500 Q0 0 3.500 0 H10 Q12 0 13.500 2 L15 4 H26.500 Q30 4 30 7.500 V23 Q30 26.500 26.500 26.500 H3.500 Q0 26.500 0 23 Z" fill="#4678BD"/></svg>
<div class="box" style="left:835.4px;top:410.4px;width:7.2px;height:7.2px;background:#1C2B33;border-radius:3.6px;"></div>
<div class="box" style="left:848.4px;top:410.4px;width:7.2px;height:7.2px;background:#1C2B33;border-radius:3.6px;"></div>
<div class="box" style="left:861.4px;top:410.4px;width:7.2px;height:7.2px;background:#1C2B33;border-radius:3.6px;"></div>
<svg style="left:260px;top:491px;" width="31" height="31" viewBox="0 0 31 31" fill="none"><g stroke="#1C2B33" stroke-width="2.500"><rect x="1.250" y="1.250" width="11.500" height="11.500" rx="2"/><rect x="18.250" y="1.250" width="11.500" height="11.500" rx="2"/><rect x="1.250" y="18.250" width="11.500" height="11.500" rx="2"/><rect x="18.250" y="18.250" width="11.500" height="11.500" rx="2"/></g></svg>
<div class="box" style="left:835.4px;top:502.4px;width:7.2px;height:7.2px;background:#1C2B33;border-radius:3.6px;"></div>
<div class="box" style="left:848.4px;top:502.4px;width:7.2px;height:7.2px;background:#1C2B33;border-radius:3.6px;"></div>
<div class="box" style="left:861.4px;top:502.4px;width:7.2px;height:7.2px;background:#1C2B33;border-radius:3.6px;"></div>
<svg style="left:294px;top:585px;" width="28" height="28" viewBox="0 0 28 28" fill="none"><g stroke="#1C2B33" color="#1C2B33" stroke-width="2.300"><rect x="1.250" y="1.250" width="25.500" height="25.500" rx="3"/><path d="M8.500 7 H21.500" stroke-linecap="round"/><circle cx="5.200" cy="7" r="0.900" fill="currentColor"/></g></svg>
<div class="box" style="left:835.4px;top:594.4px;width:7.2px;height:7.2px;background:#1C2B33;border-radius:3.6px;"></div>
<div class="box" style="left:848.4px;top:594.4px;width:7.2px;height:7.2px;background:#1C2B33;border-radius:3.6px;"></div>
<div class="box" style="left:861.4px;top:594.4px;width:7.2px;height:7.2px;background:#1C2B33;border-radius:3.6px;"></div>
<div class="box" style="left:915px;top:525px;width:1965px;height:1207.5px;background:linear-gradient(90deg,#F2EBF3 0%,#ECE8F5 30%,#E8EAF7 55%,#E8EEF8 100%);"></div>
<div class="box" style="left:915px;top:525px;width:1965px;height:1207.5px;background:linear-gradient(90deg,#E3EEF6 0%,#E5EEF3 50%,#E9F2F0 100%);-webkit-mask-image:linear-gradient(180deg,transparent 0%,rgba(0,0,0,0.5) 45%,#000 100%);mask-image:linear-gradient(180deg,transparent 0%,rgba(0,0,0,0.5) 45%,#000 100%);"></div>
<div class="box" style="left:915px;top:244px;width:1965px;height:281px;background:#fff;"></div>
<div class="box" style="left:915px;top:244px;width:1965px;height:3px;background:linear-gradient(#E4E7EA,#fff);"></div>
<div class="box" style="left:939px;top:252px;width:80px;height:72px;background:#fff;border-radius:7px;border:2px solid #9AA6B5;"></div>
<svg style="left:964px;top:273px;" width="30" height="30" viewBox="0 0 30 30" fill="none"><rect x="1.300" y="1.300" width="27.400" height="27.400" rx="5" stroke="#1C2B33" stroke-width="2.600"/><path d="M1.300 6.500 Q1.300 1.300 6.500 1.300 H12.700 V28.700 H6.500 Q1.300 28.700 1.300 23.500 Z" fill="#1C2B33"/><path d="M4.800 6 H8.500 M4.800 10 H8.500 M4.800 14.100 H8.500" stroke="#fff" stroke-width="2.100" stroke-linecap="round"/></svg>
<div class="box" style="left:1043px;top:260px;width:637px;height:56px;background:#E5ECF6;border-radius:8px;"></div>
<svg style="left:1052px;top:275px;" width="30" height="27" viewBox="0 0 30 27" fill="none"><path d="M0 3.500 Q0 0 3.500 0 H10 Q12 0 13.500 2 L15 4 H26.500 Q30 4 30 7.500 V23 Q30 26.500 26.500 26.500 H3.500 Q0 26.500 0 23 Z" fill="#4678BD"/></svg>
<svg style="left:1702px;top:276px;" width="14" height="24" viewBox="0 0 14 24" fill="none"><path d="M2 2 L12 12 L2 22" stroke="#1C2B33" stroke-width="2.800" stroke-linecap="round" stroke-linejoin="round"/></svg>
<svg style="left:1744px;top:272px;" width="31" height="31" viewBox="0 0 31 31" fill="none"><g stroke="#1C2B33" stroke-width="2.500"><rect x="1.250" y="1.250" width="11.500" height="11.500" rx="2"/><rect x="18.250" y="1.250" width="11.500" height="11.500" rx="2"/><rect x="1.250" y="18.250" width="11.500" height="11.500" rx="2"/><rect x="18.250" y="18.250" width="11.500" height="11.500" rx="2"/></g></svg>
<svg style="left:1923px;top:276px;" width="14" height="24" viewBox="0 0 14 24" fill="none"><path d="M2 2 L12 12 L2 22" stroke="#1C2B33" stroke-width="2.800" stroke-linecap="round" stroke-linejoin="round"/></svg>
<svg style="left:1966px;top:274px;" width="28" height="28" viewBox="0 0 28 28" fill="none"><g stroke="#1C2B33" color="#1C2B33" stroke-width="2.300"><rect x="1.250" y="1.250" width="25.500" height="25.500" rx="3"/><path d="M8.500 7 H21.500" stroke-linecap="round"/><circle cx="5.200" cy="7" r="0.900" fill="currentColor"/></g></svg>
<div class="box" style="left:2482px;top:276px;width:24px;height:24px;background:#3C6E50;border-radius:12px;"></div>
<div class="box" style="left:2628px;top:266px;width:2px;height:44px;background:#D0D6DC;"></div>
<div class="box" style="left:2652px;top:266px;width:76px;height:44px;background:#E5ECF6;border-radius:22px;border:2px solid #C9D1DC;"></div>
<div class="box" style="left:2685.5px;top:268px;width:40px;height:40px;background:#4678BD;border-radius:20px;"></div>
<div class="box" style="left:2760px;top:252px;width:80px;height:72px;background:#fff;border-radius:8px;border:2px solid #9AA6B5;"></div>
<div class="box" style="left:2786.7px;top:285.2px;width:5.6px;height:5.6px;background:#1C2B33;border-radius:2.8px;"></div>
<div class="box" style="left:2797.2px;top:285.2px;width:5.6px;height:5.6px;background:#1C2B33;border-radius:2.8px;"></div>
<div class="box" style="left:2807.7px;top:285.2px;width:5.6px;height:5.6px;background:#1C2B33;border-radius:2.8px;"></div>
<div class="box" style="left:916px;top:340px;width:973px;height:71px;background:#E5ECF6;border-radius:8px;"></div>
<svg style="left:1294px;top:361px;" width="30" height="28" viewBox="0 0 30 28" fill="none"><g stroke="#4678BD" stroke-width="2.200"><rect x="1.100" y="19.100" width="4.800" height="7.800" rx="1"/><rect x="8.100" y="10.100" width="4.800" height="16.800" rx="1"/><rect x="15.100" y="13.100" width="4.800" height="13.800" rx="1"/><rect x="22.100" y="1.100" width="4.800" height="25.800" rx="1"/></g></svg>
<svg style="left:2311px;top:360px;" width="34" height="34" viewBox="0 0 34 34" fill="none"><path d="M8.500 30 A15 15 0 1 1 25.500 30" stroke="#1C2B33" stroke-width="2.800" stroke-linecap="round"/><path d="M17 28 V13 M10.500 19 L17 12.500 L23.500 19" stroke="#1C2B33" stroke-width="2.800" stroke-linecap="round" stroke-linejoin="round"/></svg>
<div class="box" style="left:915px;top:420px;width:1965px;height:2px;background:#E3E7EB;"></div>
<div class="box" style="left:1039px;top:438px;width:172px;height:72px;background:#E5ECF6;border-radius:8px;"></div>
<div class="box" style="left:2262px;top:438px;width:602px;height:72px;background:#fff;border-radius:8px;border:2px solid #9AA6B5;"></div>
<svg style="left:2287px;top:459px;" width="30" height="30" viewBox="0 0 30 30" fill="none"><g stroke="#1C2B33" stroke-width="2.300"><rect x="1.200" y="1.200" width="27.600" height="27.600" rx="5"/><path d="M1.200 10 H28.800 M1.200 19.500 H28.800 M10.500 10 V28.800 M19.500 10 V28.800 M7 5.600 H23" stroke-linecap="round"/></g></svg>
<svg style="left:2815px;top:468px;" width="18" height="12" viewBox="0 0 18 12" fill="none"><path d="M2 0.500 H17 Q19.500 0.500 18 2.500 L11 10.800 Q9.500 12.300 8 10.800 L1 2.500 Q-0.500 0.500 2 0.500 Z" fill="#1C2B33"/></svg>
<div class="box" style="left:963px;top:590px;width:1359px;height:988px;background:#fff;border-radius:8px 7px 7px 8px;"></div>
<div class="box" style="left:2322px;top:590px;width:510px;height:988px;background:#fff;"></div>
<div class="box" style="left:2323px;top:590px;width:26px;height:988px;background:linear-gradient(90deg,#F7F8FD,#fff);"></div>
<div class="box" style="left:2321px;top:590px;width:2px;height:306px;background:#C9D0DA;"></div>
<div class="box" style="left:2346px;top:589px;width:462px;height:2px;background:#C9D0DA;"></div>
<div class="box" style="left:1519px;top:622px;width:147px;height:72px;background:#fff;border-radius:8px;border:2px solid #C6CDD5;"></div>
<svg style="left:1617px;top:653px;" width="18" height="12" viewBox="0 0 18 12" fill="none"><path d="M2 0.500 H17 Q19.500 0.500 18 2.500 L11 10.800 Q9.500 12.300 8 10.800 L1 2.500 Q-0.500 0.500 2 0.500 Z" fill="#1C2B33"/></svg>
<div class="box" style="left:1682px;top:622px;width:350px;height:72px;background:#fff;border-radius:8px;border:2px solid #9AA6B5;"></div>
<svg style="left:1982px;top:653px;" width="18" height="12" viewBox="0 0 18 12" fill="none"><path d="M2 0.500 H17 Q19.500 0.500 18 2.500 L11 10.800 Q9.500 12.300 8 10.800 L1 2.500 Q-0.500 0.500 2 0.500 Z" fill="#1C2B33"/></svg>
<div class="box" style="left:2048px;top:622px;width:242px;height:72px;background:#fff;border-radius:8px;border:2px solid #9AA6B5;"></div>
<svg style="left:2074px;top:646px;" width="32" height="28" viewBox="0 0 32 28" fill="none"><path d="M1.400 1.700 H26 M1.400 12 H7.300 M1.400 21.600 H7.300" stroke="#1C2B33" stroke-width="2.200"/><g transform="translate(20.400 17.200)"><circle r="6.600" fill="#1C2B33"/><g stroke="#1C2B33" stroke-width="4.200" stroke-linecap="butt"><path d="M0 -9.600 V9.600 M-8.310 -4.800 L8.310 4.800 M-8.310 4.800 L8.310 -4.800"/></g><circle r="2.700" fill="#fff"/></g></svg>
<div class="box" style="left:995px;top:726px;width:421px;height:152px;background:#fff;border-radius:8px;border:2px solid #C6CDD5;"></div>
<div class="box" style="left:1191px;top:750px;width:24px;height:24px;background:#313C47;border-radius:12px;"></div>
<div class="box" style="left:1201.9px;top:760.3px;width:3.2px;height:10.4px;background:#fff;border-radius:0 0 1.6px 1.6px;"></div>
<div class="box" style="left:1199.9px;top:760.3px;width:3px;height:2.7px;background:#fff;border-radius:1.3px 0 0 1.3px;"></div>
<div class="box" style="left:1201px;top:754.1px;width:4.2px;height:4.2px;background:#fff;border-radius:2.1px;"></div>
<div class="box" style="left:1651px;top:750px;width:24px;height:24px;background:#313C47;border-radius:12px;"></div>
<div class="box" style="left:1661.9px;top:760.3px;width:3.2px;height:10.4px;background:#fff;border-radius:0 0 1.6px 1.6px;"></div>
<div class="box" style="left:1659.9px;top:760.3px;width:3px;height:2.7px;background:#fff;border-radius:1.3px 0 0 1.3px;"></div>
<div class="box" style="left:1661px;top:754.1px;width:4.2px;height:4.2px;background:#fff;border-radius:2.1px;"></div>
<div class="box" style="left:2079px;top:750px;width:24px;height:24px;background:#313C47;border-radius:12px;"></div>
<div class="box" style="left:2089.9px;top:760.3px;width:3.2px;height:10.4px;background:#fff;border-radius:0 0 1.6px 1.6px;"></div>
<div class="box" style="left:2087.9px;top:760.3px;width:3px;height:2.7px;background:#fff;border-radius:1.3px 0 0 1.3px;"></div>
<div class="box" style="left:2089px;top:754.1px;width:4.2px;height:4.2px;background:#fff;border-radius:2.1px;"></div>
<div class="box" style="left:1101px;top:980.5px;width:1101px;height:2px;background:#D7D9DC;"></div>
<div class="box" style="left:1101px;top:1061px;width:1101px;height:2px;background:#D7D9DC;"></div>
<div class="box" style="left:1101px;top:1141.5px;width:1101px;height:2px;background:#D7D9DC;"></div>
<div class="box" style="left:1101px;top:1222px;width:1101px;height:2px;background:#D7D9DC;"></div>
<div class="box" style="left:1101px;top:1302.5px;width:1101px;height:2px;background:#D7D9DC;"></div>
<svg style="left:0;top:0" width="2880" height="1800" viewBox="0 0 2880 1800"><polyline points="2178.0,1255.2 2179.0,1255.2 2180.0,1126.4 2181.0,1255.2 2182.0,1150.5 2183.0,1255.2 2184.0,1255.2 2185.0,1142.5 2186.0,1142.5 2187.0,1255.2 2188.0,1206.9 2189.0,1206.9 2190.0,1255.2 2191.0,1223.0 2192.0,1271.3 2193.0,1255.2 2194.0,1223.0 2195.0,1223.0 2196.0,1271.3 2197.0,1263.2 2198.0,1223.0 2199.0,1247.2 2200.0,1206.9 2201.0,1206.9 2202.0,1239.1 2203.0,1255.2" fill="none" stroke="#7BCBCB" stroke-width="3.600" stroke-linejoin="round" stroke-linecap="round"/><rect x="2178" y="1152" width="8.500" height="104" fill="#7BCBCB"/><rect x="2186" y="1222" width="12" height="34" fill="#7BCBCB"/></svg>
<svg style="left:2167.1px;top:1293.6px" width="24.2" height="24.2" viewBox="0 0 32 32" fill="none"><g stroke="#0A0A0A" color="#0A0A0A"><rect x="0.300" y="-1" width="33" height="34" fill="#fff" stroke="none"/><path d="M20.700 2.400 A14.400 14.400 0 0 0 5.600 25.800" stroke-width="3.9" stroke-linecap="round" fill="none"/><path d="M2.800 27.800 L9.600 29.600 L8.900 23.300 Z" fill="currentColor" stroke-width="1.600" stroke-linejoin="round"/><path d="M29.700 11.550 A14.400 14.400 0 0 1 23.400 28.300" stroke-width="3.9" stroke-linecap="round" fill="none"/><path d="M15.800 15.500 L24.800 7.600" stroke-width="4.400" fill="none"/><circle cx="15.600" cy="15.900" r="2.200" fill="currentColor" stroke="none"/><path d="M29.100 0.400 L32 3.300 L29.100 6.200 L26.200 3.300 Z" fill="currentColor" stroke="none"/></g></svg>
<svg style="left:2184.2px;top:1293.6px" width="24.2" height="24.2" viewBox="0 0 32 32" fill="none"><g stroke="#0A0A0A" color="#0A0A0A"><rect x="0.300" y="-1" width="33" height="34" fill="#fff" stroke="none"/><path d="M20.700 2.400 A14.400 14.400 0 0 0 5.600 25.800" stroke-width="3.9" stroke-linecap="round" fill="none"/><path d="M2.800 27.800 L9.600 29.600 L8.900 23.300 Z" fill="currentColor" stroke-width="1.600" stroke-linejoin="round"/><path d="M29.700 11.550 A14.400 14.400 0 0 1 23.400 28.300" stroke-width="3.9" stroke-linecap="round" fill="none"/><path d="M15.800 15.500 L24.800 7.600" stroke-width="4.400" fill="none"/><circle cx="15.600" cy="15.900" r="2.200" fill="currentColor" stroke="none"/><path d="M29.100 0.400 L32 3.300 L29.100 6.200 L26.200 3.300 Z" fill="currentColor" stroke="none"/></g></svg>
<div class="box" style="left:1365px;top:1390px;width:32px;height:32px;background:#7BCBCB;border-radius:4px;"></div>
<svg style="left:1646.9px;top:1390.6px" width="32" height="32" viewBox="0 0 32 32" fill="none"><g stroke="#1C2B33" color="#1C2B33"><path d="M20.700 2.400 A14.400 14.400 0 0 0 5.600 25.800" stroke-width="2.7" stroke-linecap="round" fill="none"/><path d="M2.800 27.800 L9.600 29.600 L8.900 23.300 Z" fill="currentColor" stroke-width="1.600" stroke-linejoin="round"/><path d="M29.700 11.550 A14.400 14.400 0 0 1 23.400 28.300" stroke-width="2.7" stroke-linecap="round" fill="none"/><path d="M15.800 15.500 L24.800 7.600" stroke-width="4.400" fill="none"/><circle cx="15.600" cy="15.900" r="2.200" fill="currentColor" stroke="none"/><path d="M29.100 0.400 L32 3.300 L29.100 6.200 L26.200 3.300 Z" fill="currentColor" stroke="none"/></g></svg>
<div class="box" style="left:963px;top:1610px;width:1869px;height:122px;background:#fff;border-radius:8px 8px 0 0;"></div>
<div class="box" style="left:979px;top:1626px;width:305px;height:72px;background:#E5ECF6;border-radius:8px;"></div>
<svg style="left:1007px;top:1650px;" width="32" height="26" viewBox="0 0 32 26" fill="none"><g fill="#4678BD"><circle cx="11.500" cy="6.500" r="6"/><path d="M0 24 Q0 14.500 11.500 14.500 Q23 14.500 23 24 Q23 26 21 26 H2 Q0 26 0 24 Z"/><circle cx="24.500" cy="8" r="4.600"/><path d="M25.500 24 Q25.500 18 22.500 15 Q32 14 32 23 Q32 24.500 30.500 24.500 H25.500 Z"/></g></svg>
<svg style="left:1329.5px;top:1650px;" width="30" height="30" viewBox="0 0 32 32" fill="none"><g stroke="#1C2B33" stroke-width="2.300"><path d="M8 20 H6 Q1.200 20 1.200 15.500 V6 Q1.200 1.200 6 1.200 H15.500 Q20 1.200 20 6 V8" stroke-linecap="round"/><rect x="10.200" y="10.200" width="20.600" height="20.600" rx="5"/></g></svg>
<div class="box" style="left:2186px;top:1730.3px;width:296px;height:20px;background:#fff;border-radius:8px;border:2px solid #9AA6B5;"></div>
<div class="box" style="left:2503px;top:1730.3px;width:294px;height:20px;background:#fff;border-radius:8px;border:2px solid #9AA6B5;"></div>
<span class="t m" id="t0" style="left:2703.5px;top:25.5px;font-size:27px;line-height:32px;color:#F1E5DC;letter-spacing:0.045px;-webkit-text-stroke:0.85px #F1E5DC;">Ask Gemini</span>
<span class="t m" id="t1" style="left:314px;top:111.5px;font-size:28px;line-height:34px;color:#4B4640;letter-spacing:0.903px;-webkit-text-stroke:0.25px;"><span style="color:#1F1F1F">adsmanager.facebook.com</span>/adsmanager/manage/campaigns/insights?act=159230947143014&amp;business_id=213400821859331&amp;global_scope_id=21340082...</span>
<span class="t m" id="t2" style="left:2757.2px;top:116.8px;font-size:20px;line-height:24px;color:#fff;">P</span>
<span class="t m" id="t3" style="left:2691px;top:192.5px;font-size:25px;line-height:30px;color:#1F1F1F;letter-spacing:-0.097px;-webkit-text-stroke:0.3px;">All Bookmarks</span>
<span class="t m" id="t4" style="left:56.5px;top:397.0px;font-size:25px;line-height:30px;color:#fff;font-weight:700;letter-spacing:0.094px;">36</span>
<span class="t m" id="t5" style="left:46.5px;top:1365.0px;font-size:38px;line-height:46px;color:#2E363D;-webkit-text-stroke:0.9px;">?</span>
<span class="t m" id="t6" style="left:299px;top:278.1px;font-size:28px;line-height:34px;color:#687580;letter-spacing:-0.453px;-webkit-text-stroke:0.35px;">Search</span>
<span class="t m" id="t7" style="left:277px;top:400.2px;font-size:28px;line-height:34px;color:#1C2B33;letter-spacing:-0.066px;-webkit-text-stroke:0.35px;">GO-TO PODCAST MARKETING ADS ...</span>
<span class="t m" id="t8" style="left:309px;top:492.7px;font-size:28px;line-height:34px;color:#1C2B33;letter-spacing:-0.127px;-webkit-text-stroke:0.35px;">TARGET AUDIENCE</span>
<span class="t m" id="t9" style="left:341px;top:583.5px;font-size:28px;line-height:34px;color:#1C2B33;letter-spacing:-0.314px;-webkit-text-stroke:0.35px;">New Sales ad</span>
<span class="t m" id="t10" style="left:1091.5px;top:272.0px;font-size:29px;line-height:35px;color:#4678BD;letter-spacing:0.500px;-webkit-text-stroke:0.35px;">GO-TO PODCAST MARKETING ADS NEW</span>
<span class="t m" id="t11" style="left:1784px;top:272.0px;font-size:29px;line-height:35px;color:#65737E;letter-spacing:0.148px;-webkit-text-stroke:0.35px;">1 Ad set</span>
<span class="t m" id="t12" style="left:2004px;top:272.0px;font-size:29px;line-height:35px;color:#65737E;letter-spacing:-0.988px;-webkit-text-stroke:0.35px;">1 ad</span>
<span class="t m" id="t13" style="left:2524px;top:272.2px;font-size:29px;line-height:35px;color:#1C2B33;-webkit-text-stroke:0.35px;">Active</span>
<span class="t m" id="t14" style="left:1342px;top:360.3px;font-size:28px;line-height:34px;color:#4678BD;font-weight:700;letter-spacing:-0.244px;">Performance</span>
<span class="t m" id="t15" style="left:2377px;top:360.2px;font-size:29px;line-height:35px;color:#1C2B33;letter-spacing:0.127px;-webkit-text-stroke:0.35px;">Actions</span>
<span class="t m" id="t16" style="left:1064px;top:458.5px;font-size:28px;line-height:34px;color:#4678BD;font-weight:700;letter-spacing:-0.254px;">Overview</span>
<span class="t m" id="t17" style="left:1254.5px;top:459.0px;font-size:29px;line-height:35px;color:#1C2B33;letter-spacing:0.147px;-webkit-text-stroke:0.35px;">Budget forecasts</span>
<span class="t m" id="t18" style="left:2336px;top:459.0px;font-size:29px;line-height:35px;color:#1C2B33;letter-spacing:0.014px;-webkit-text-stroke:0.35px;">Maximum: 3 Mar 2023 - 3 Apr 2026</span>
<span class="t m" id="t19" style="left:996px;top:624.0px;font-size:32px;line-height:38px;color:#1C2B33;font-weight:700;letter-spacing:-0.325px;">Performance overview</span>
<span class="t m" id="t20" style="left:1544.5px;top:643.2px;font-size:29px;line-height:35px;color:#1C2B33;letter-spacing:-0.859px;-webkit-text-stroke:0.35px;">Day</span>
<span class="t m" id="t21" style="left:1714.5px;top:643.2px;font-size:29px;line-height:35px;color:#1C2B33;letter-spacing:0.592px;-webkit-text-stroke:0.35px;">Activity history: All</span>
<span class="t m" id="t22" style="left:2121px;top:643.2px;font-size:29px;line-height:35px;color:#1C2B33;letter-spacing:-0.111px;-webkit-text-stroke:0.35px;">Customise</span>
<span class="t m" id="t23" style="left:1012px;top:748.0px;font-size:26px;line-height:31px;color:#1C2B33;font-weight:700;letter-spacing:0.401px;">Leads (Form)</span>
<span class="t m" id="t24" style="left:1009px;top:785.0px;font-size:66px;line-height:79px;color:#1C2B33;-webkit-text-stroke:0.6px #fff;"><span style="display:inline-block;clip-path:polygon(0 0,100% 0,100% 70%,60% 70%,60% 100%,43.5% 100%,43.5% 70%,0 70%);margin-right:-8.5px">1</span><span style="display:inline-block;clip-path:polygon(0 0,100% 0,100% 70%,60% 70%,60% 100%,43.5% 100%,43.5% 70%,0 70%);margin-right:-6px">1</span>6</span>
<span class="t m" id="t25" style="left:1449px;top:748.0px;font-size:26px;line-height:31px;color:#1C2B33;font-weight:700;letter-spacing:0.600px;">Per lead (form)</span>
<span class="t m" id="t26" style="left:1449.5px;top:785.0px;font-size:66px;line-height:79px;color:#1C2B33;letter-spacing:0.307px;-webkit-text-stroke:0.6px #fff;">₹43.48</span>
<span class="t m" id="t27" style="left:1886px;top:748.0px;font-size:26px;line-height:31px;color:#1C2B33;font-weight:700;letter-spacing:0.728px;">Amount spent</span>
<span class="t m" id="t28" style="left:1886.5px;top:785.0px;font-size:66px;line-height:79px;color:#1C2B33;letter-spacing:0.455px;-webkit-text-stroke:0.6px #fff;">₹5,043.33</span>
<span class="t m" id="t29" style="left:2348px;top:619.0px;font-size:30px;line-height:36px;color:#1C2B33;font-weight:700;letter-spacing:-0.612px;">Your cost per lead (form) is 11%</span>
<span class="t m" id="t30" style="left:2348px;top:659.0px;font-size:30px;line-height:36px;color:#1C2B33;font-weight:700;letter-spacing:-0.588px;">lower than similar ad sets</span>
<span class="t m" id="t31" style="left:2348px;top:717.1px;font-size:29px;line-height:35px;color:#1C2B33;letter-spacing:-0.361px;-webkit-text-stroke:0.35px;">Similar ad sets run by your peers</span>
<span class="t m" id="t32" style="left:2348px;top:757.1px;font-size:29px;line-height:35px;color:#1C2B33;letter-spacing:-0.058px;-webkit-text-stroke:0.35px;">between 9 Mar 2026 and 3 Apr</span>
<span class="t m" id="t33" style="left:2348px;top:797.1px;font-size:29px;line-height:35px;color:#1C2B33;letter-spacing:-0.341px;-webkit-text-stroke:0.35px;">2026 have a <span style="text-decoration:underline dashed;text-decoration-thickness:2.5px;text-underline-offset:3.5px">median cost per lead</span></span>
<span class="t m" id="t34" style="left:2348px;top:837.1px;font-size:29px;line-height:35px;color:#1C2B33;letter-spacing:0.065px;-webkit-text-stroke:0.35px;"><span style="text-decoration:underline dashed;text-decoration-thickness:2.5px;text-underline-offset:3.5px">(form)</span> of $47.30.</span>
<span class="t m" id="t35" style="left:996px;top:897.0px;font-size:30px;line-height:36px;color:#1C2B33;font-weight:700;letter-spacing:0.372px;">Leads (Form)</span>
<span class="t m" id="t36" style="left:1050.5px;top:966.5px;font-size:28px;line-height:34px;color:#1C2B33;letter-spacing:0.922px;-webkit-text-stroke:0.35px;">20</span>
<span class="t m" id="t37" style="left:1054.5px;top:1047.0px;font-size:28px;line-height:34px;color:#1C2B33;letter-spacing:-1.078px;-webkit-text-stroke:0.35px;">15</span>
<span class="t m" id="t38" style="left:1054px;top:1127.5px;font-size:28px;line-height:34px;color:#1C2B33;letter-spacing:-0.828px;-webkit-text-stroke:0.35px;">10</span>
<span class="t m" id="t39" style="left:1068.5px;top:1208.0px;font-size:28px;line-height:34px;color:#1C2B33;letter-spacing:-0.578px;-webkit-text-stroke:0.35px;">5</span>
<span class="t m" id="t40" style="left:1067.5px;top:1288.5px;font-size:28px;line-height:34px;color:#1C2B33;letter-spacing:0.422px;-webkit-text-stroke:0.35px;">0</span>
<span class="t m" id="t41" style="left:1092px;top:1316.5px;font-size:28px;line-height:34px;color:#1C2B33;letter-spacing:0.386px;-webkit-text-stroke:0.35px;">3 Mar 2023</span>
<span class="t m" id="t42" style="left:1344px;top:1316.5px;font-size:28px;line-height:34px;color:#1C2B33;letter-spacing:0.109px;-webkit-text-stroke:0.35px;">10 Dec 2023</span>
<span class="t m" id="t43" style="left:1605px;top:1316.5px;font-size:28px;line-height:34px;color:#1C2B33;letter-spacing:-0.165px;-webkit-text-stroke:0.35px;">17 Sep 2024</span>
<span class="t m" id="t44" style="left:1863px;top:1316.5px;font-size:28px;line-height:34px;color:#1C2B33;letter-spacing:0.533px;-webkit-text-stroke:0.35px;">26 Jun 2025</span>
<span class="t m" id="t45" style="left:2131px;top:1316.5px;font-size:28px;line-height:34px;color:#1C2B33;letter-spacing:0.655px;-webkit-text-stroke:0.35px;">3 Apr 2026</span>
<span class="t m" id="t46" style="left:1415px;top:1390.5px;font-size:28px;line-height:34px;color:#1C2B33;letter-spacing:-0.046px;-webkit-text-stroke:0.35px;">Leads (Form)</span>
<span class="t m" id="t47" style="left:1696px;top:1390.5px;font-size:28px;line-height:34px;color:#1C2B33;letter-spacing:0.559px;-webkit-text-stroke:0.35px;">Historical edits</span>
<span class="t m" id="t48" style="left:1071px;top:1646.5px;font-size:28px;line-height:34px;color:#4678BD;font-weight:700;letter-spacing:-0.542px;">Demographics</span>
<span class="t m" id="t49" style="left:1395.4px;top:1647.0px;font-size:28px;line-height:34px;color:#1C2B33;letter-spacing:0.844px;-webkit-text-stroke:0.35px;">Platform</span>
<div class="box" style="left:0;top:1732.5px;width:2880px;height:67.5px;background:linear-gradient(90deg,#E9EDF5 0%,#E8EEF8 12%,#E9EFF6 40%,#ECF4F1 70%,#EEF6F0 100%);"></div><div class="box" style="left:0;top:1732.5px;width:2880px;height:5px;background:linear-gradient(rgba(40,60,80,0.10),rgba(40,60,80,0));"></div><div class="box" style="left:0;top:1731.5px;width:2880px;height:1.500px;background:#C3C9D0"></div>
</body></html>
